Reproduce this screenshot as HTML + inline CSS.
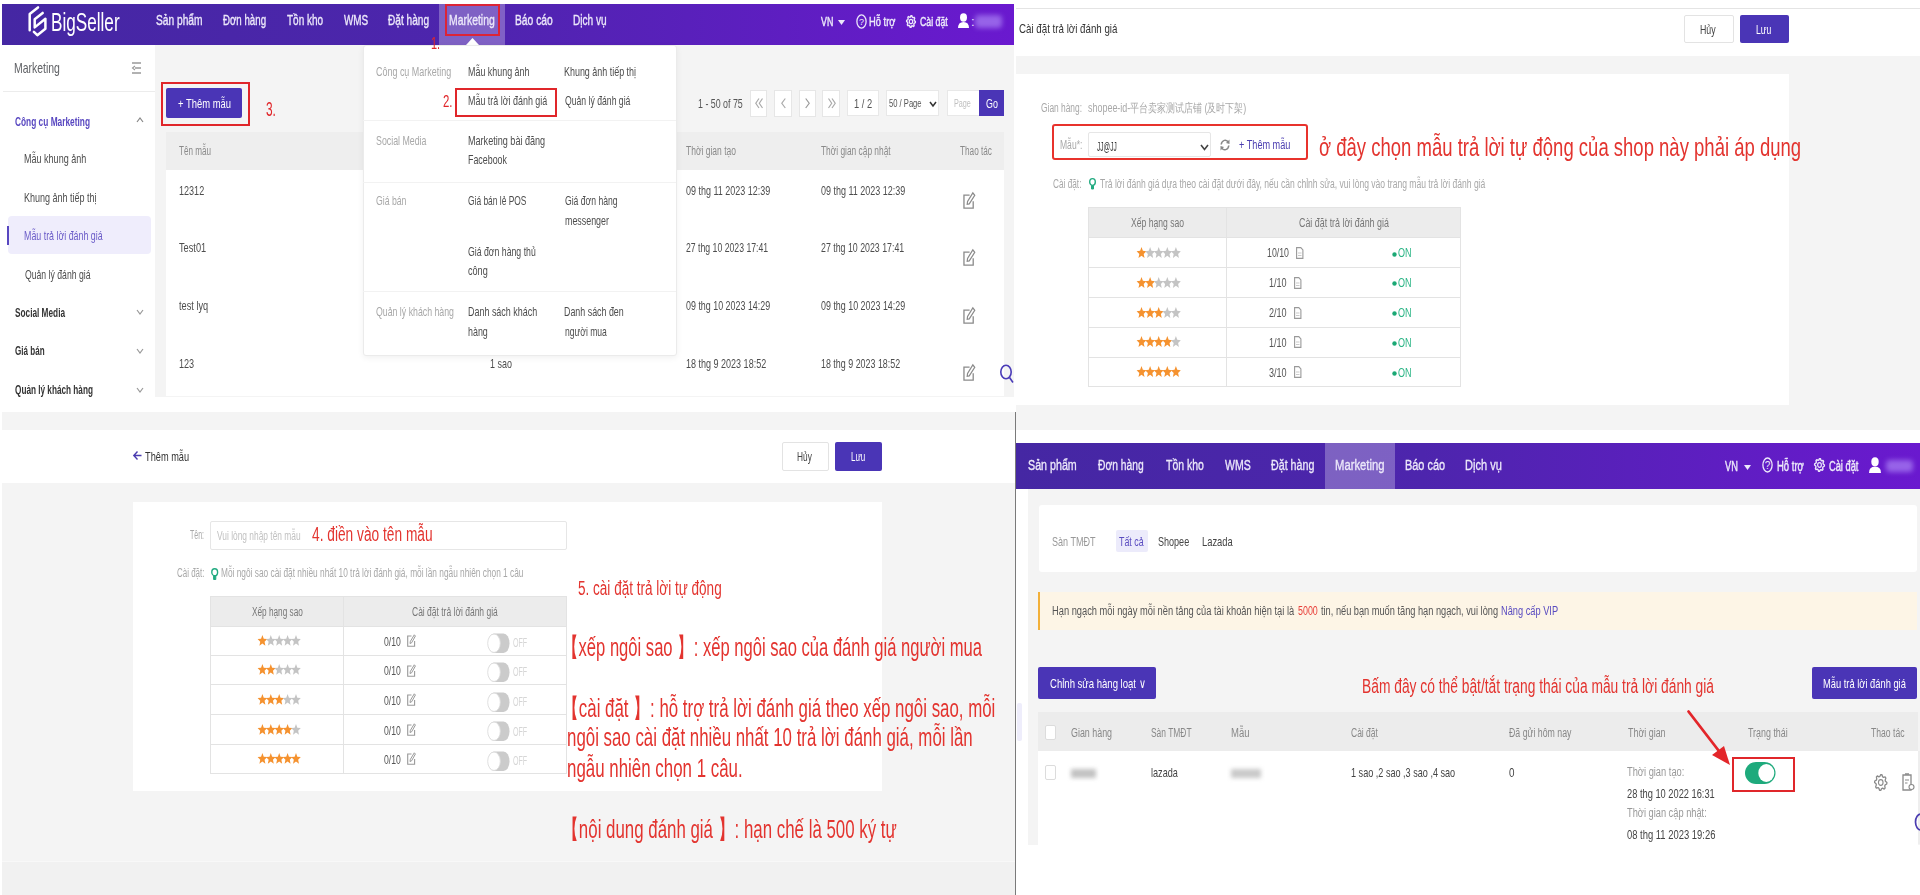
<!DOCTYPE html>
<html><head><meta charset="utf-8"><title>BigSeller</title>
<style>
html,body{margin:0;padding:0;}
body{width:1920px;height:895px;overflow:hidden;position:relative;background:#f4f4f4;font-family:"Liberation Sans", sans-serif;}
.t{position:absolute;white-space:nowrap;line-height:1;transform-origin:0 0;font-family:"Liberation Sans", sans-serif;}
svg{display:block}
</style></head><body>
<div style="position:absolute;left:0px;top:0px;width:1016px;height:412px;background:#ffffff;"></div>
<div style="position:absolute;left:2px;top:4px;width:1012px;height:41px;background:linear-gradient(90deg,#4527a3 0%,#4d25ad 45%,#6a19cf 100%);"></div>
<div style="position:absolute;left:439px;top:4px;width:66px;height:41px;background:rgba(255,255,255,0.28);"></div>
<svg style="position:absolute;left:0px;top:0px;overflow:visible" width="60" height="45" viewBox="0 0 60 45"><path d="M38,7.4 L29.7,14 L29.7,30.3" fill="none" stroke="#fff" stroke-width="2.5" stroke-linecap="round" stroke-linejoin="round"/><path d="M42.7,12.9 L34.7,19.2 L34.7,27.4 L45.4,18.8 L45.4,28.7 L37.3,35.2 L33.9,31.9" fill="none" stroke="#fff" stroke-width="2.5" stroke-linecap="round" stroke-linejoin="round"/></svg>
<span class="t" style="left:50.63px;top:9.84px;font-size:25px;color:#ffffff;font-weight:400;transform:scaleX(0.6856);">BigSeller</span>
<span class="t" style="left:156.00px;top:13.23px;font-size:14.5px;color:#ece8fa;font-weight:400;transform:scaleX(0.7043);-webkit-text-stroke:0.35px #ece8fa">Sản phẩm</span>
<span class="t" style="left:223.00px;top:13.23px;font-size:14.5px;color:#ece8fa;font-weight:400;transform:scaleX(0.6691);-webkit-text-stroke:0.35px #ece8fa">Đơn hàng</span>
<span class="t" style="left:287.00px;top:13.23px;font-size:14.5px;color:#ece8fa;font-weight:400;transform:scaleX(0.6880);-webkit-text-stroke:0.35px #ece8fa">Tồn kho</span>
<span class="t" style="left:343.75px;top:13.23px;font-size:14.5px;color:#ece8fa;font-weight:400;transform:scaleX(0.6832);-webkit-text-stroke:0.35px #ece8fa">WMS</span>
<span class="t" style="left:388.00px;top:13.23px;font-size:14.5px;color:#ece8fa;font-weight:400;transform:scaleX(0.6975);-webkit-text-stroke:0.35px #ece8fa">Đặt hàng</span>
<span class="t" style="left:449.28px;top:13.23px;font-size:14.5px;color:#ece8fa;font-weight:400;transform:scaleX(0.7189);-webkit-text-stroke:0.35px #ece8fa">Marketing</span>
<span class="t" style="left:515.29px;top:13.23px;font-size:14.5px;color:#ece8fa;font-weight:400;transform:scaleX(0.7096);-webkit-text-stroke:0.35px #ece8fa">Báo cáo</span>
<span class="t" style="left:573.30px;top:13.23px;font-size:14.5px;color:#ece8fa;font-weight:400;transform:scaleX(0.6979);-webkit-text-stroke:0.35px #ece8fa">Dịch vụ</span>
<div style="position:absolute;left:444.5px;top:4px;width:55.5px;height:31.5px;box-sizing:border-box;border:2.6px solid #dc2436;background:transparent;border-radius:0px;"></div>
<span class="t" style="left:821.00px;top:15.30px;font-size:13px;color:#ece8fa;font-weight:400;transform:scaleX(0.6791);-webkit-text-stroke:0.45px #ece8fa">VN</span>
<svg style="position:absolute;left:838px;top:20px;overflow:visible" width="7" height="5" viewBox="0 0 7 5"><polygon points="0,0 7,0 3.5,5" fill="#ece8fa"/></svg>
<svg style="position:absolute;left:856px;top:14px;overflow:visible" width="11" height="15" viewBox="0 0 11 15"><ellipse cx="5.5" cy="7.5" rx="4.6" ry="6.6" fill="none" stroke="#ece8fa" stroke-width="1.3"/><text x="5.5" y="11" font-size="9" text-anchor="middle" fill="#ece8fa" font-family="Liberation Sans">?</text></svg>
<span class="t" style="left:869.28px;top:15.30px;font-size:13px;color:#ece8fa;font-weight:400;transform:scaleX(0.7188);-webkit-text-stroke:0.45px #ece8fa">Hỗ trợ</span>
<svg style="position:absolute;left:906px;top:15px;overflow:visible" width="10" height="13" viewBox="0 0 10 13"><polygon points="5.00,0.60 5.86,0.71 6.31,2.25 6.91,2.67 8.11,2.33 8.66,3.22 8.17,4.74 8.37,5.60 9.40,6.50 9.32,7.65 8.17,8.26 7.85,9.06 8.11,10.67 7.44,11.41 6.31,10.75 5.67,11.01 5.00,12.40 4.14,12.29 3.69,10.75 3.09,10.33 1.89,10.67 1.34,9.78 1.83,8.26 1.63,7.40 0.60,6.50 0.68,5.35 1.83,4.74 2.15,3.94 1.89,2.33 2.56,1.59 3.69,2.25 4.33,1.99" fill="none" stroke="#ece8fa" stroke-width="1.4" stroke-linejoin="round"/><ellipse cx="5.0" cy="6.5" rx="1.7000000000000002" ry="2.21" fill="none" stroke="#ece8fa" stroke-width="1.19"/></svg>
<span class="t" style="left:920.00px;top:15.30px;font-size:13px;color:#ece8fa;font-weight:400;transform:scaleX(0.6734);-webkit-text-stroke:0.45px #ece8fa">Cài đặt</span>
<svg style="position:absolute;left:958px;top:13px;overflow:visible" width="11" height="15" viewBox="0 0 11 15"><ellipse cx="5.5" cy="4.5" rx="3.5" ry="4.2" fill="#fff"/><path d="M0,15 Q0,9 5.5,9 Q11,9 11,15 Z" fill="#fff"/></svg>
<span class="t" style="left:971.00px;top:15.30px;font-size:13px;color:#ece8fa;font-weight:400;transform:scaleX(1.0000);">:</span>
<div style="position:absolute;left:975px;top:15px;width:27px;height:13px;background:rgba(190,160,255,0.55);filter:blur(2.5px);border-radius:4px"></div>
<svg style="position:absolute;left:466px;top:38px;overflow:visible" width="13" height="7" viewBox="0 0 13 7"><polygon points="0,7 6.5,0 13,7" fill="#fff"/></svg>
<span class="t" style="left:14.30px;top:60.30px;font-size:15px;color:#606266;font-weight:400;transform:scaleX(0.6975);">Marketing</span>
<svg style="position:absolute;left:132px;top:62px;overflow:visible" width="9" height="12" viewBox="0 0 9 12"><path d="M0,1 H9 M3,6 H9 M0,11 H9" stroke="#999" stroke-width="1.3"/><path d="M3,4 L0.5,6 L3,8" fill="none" stroke="#999" stroke-width="1.1"/></svg>
<div style="position:absolute;left:3px;top:90.5px;width:152px;height:1px;background:#ececec;"></div>
<span class="t" style="left:15.00px;top:114.60px;font-size:13px;color:#5847c0;font-weight:600;transform:scaleX(0.6407);">Công cụ Marketing</span>
<svg style="position:absolute;left:137px;top:118px;overflow:visible" width="6" height="4" viewBox="0 0 6 4"><polyline points="0,4 3.0,0 6,4" fill="none" stroke="#888" stroke-width="1.2"/></svg>
<span class="t" style="left:24.31px;top:152.00px;font-size:13px;color:#4d4d4d;font-weight:400;transform:scaleX(0.6946);">Mẫu khung ảnh</span>
<span class="t" style="left:24.31px;top:190.50px;font-size:13px;color:#4d4d4d;font-weight:400;transform:scaleX(0.6929);">Khung ảnh tiếp thị</span>
<div style="position:absolute;left:7.5px;top:216px;width:143px;height:38px;background:#efedfc;border-radius:4px"></div>
<div style="position:absolute;left:7px;top:226px;width:2px;height:19px;background:#5847c0;"></div>
<span class="t" style="left:24.32px;top:228.50px;font-size:13px;color:#6b5cc8;font-weight:400;transform:scaleX(0.6811);">Mẫu trả lời đánh giá</span>
<span class="t" style="left:25.00px;top:268.00px;font-size:13px;color:#4d4d4d;font-weight:400;transform:scaleX(0.6662);">Quản lý đánh giá</span>
<span class="t" style="left:15.00px;top:306.00px;font-size:13px;color:#333;font-weight:600;transform:scaleX(0.6351);">Social Media</span>
<svg style="position:absolute;left:137px;top:310px;overflow:visible" width="6" height="4" viewBox="0 0 6 4"><polyline points="0,0 3.0,4 6,0" fill="none" stroke="#999" stroke-width="1.2"/></svg>
<span class="t" style="left:15.00px;top:344.00px;font-size:13px;color:#333;font-weight:600;transform:scaleX(0.6201);">Giá bán</span>
<svg style="position:absolute;left:137px;top:349px;overflow:visible" width="6" height="4" viewBox="0 0 6 4"><polyline points="0,0 3.0,4 6,0" fill="none" stroke="#999" stroke-width="1.2"/></svg>
<span class="t" style="left:15.00px;top:383.00px;font-size:13px;color:#333;font-weight:600;transform:scaleX(0.6311);">Quản lý khách hàng</span>
<svg style="position:absolute;left:137px;top:388px;overflow:visible" width="6" height="4" viewBox="0 0 6 4"><polyline points="0,0 3.0,4 6,0" fill="none" stroke="#999" stroke-width="1.2"/></svg>
<div style="position:absolute;left:155px;top:45px;width:861px;height:352px;background:#f4f4f4;"></div>
<div style="position:absolute;left:161px;top:82px;width:89px;height:44px;box-sizing:border-box;border:2px solid #e0262a;background:transparent;border-radius:0px;"></div>
<div style="position:absolute;left:166px;top:88px;width:75.5px;height:30px;background:#4a35b6;border-radius:2px"></div>
<span class="t" style="left:178.00px;top:97.00px;font-size:13px;color:#ffffff;font-weight:400;transform:scaleX(0.7250);">+ Thêm mẫu</span>
<span class="t" style="left:266.00px;top:99.07px;font-size:20px;color:#e0262a;font-weight:400;transform:scaleX(0.5951);">3.</span>
<div style="position:absolute;left:166px;top:132px;width:838px;height:38px;background:#eeeeee;"></div>
<div style="position:absolute;left:166px;top:170px;width:838px;height:226px;background:#ffffff;"></div>
<span class="t" style="left:179.00px;top:145.42px;font-size:12.5px;color:#8a8a8a;font-weight:400;transform:scaleX(0.6481);">Tên mẫu</span>
<span class="t" style="left:686.00px;top:145.42px;font-size:12.5px;color:#8a8a8a;font-weight:400;transform:scaleX(0.6797);">Thời gian tạo</span>
<span class="t" style="left:821.00px;top:145.42px;font-size:12.5px;color:#8a8a8a;font-weight:400;transform:scaleX(0.6691);">Thời gian cập nhật</span>
<span class="t" style="left:959.70px;top:145.42px;font-size:12.5px;color:#8a8a8a;font-weight:400;transform:scaleX(0.6572);">Thao tác</span>
<span class="t" style="left:179.00px;top:184.00px;font-size:13px;color:#4d4d4d;font-weight:400;transform:scaleX(0.6960);">12312</span>
<span class="t" style="left:686.00px;top:184.00px;font-size:13px;color:#4d4d4d;font-weight:400;transform:scaleX(0.6902);">09 thg 11 2023 12:39</span>
<span class="t" style="left:821.00px;top:184.00px;font-size:13px;color:#4d4d4d;font-weight:400;transform:scaleX(0.6902);">09 thg 11 2023 12:39</span>
<svg style="position:absolute;left:963px;top:191.5px;overflow:visible" width="12" height="17" viewBox="0 0 12 17"><path d="M6.6000000000000005,3.06 H0.96 V16.15 H10.2 V9.350000000000001" fill="none" stroke="#8a8a8a" stroke-width="1.3"/><path d="M4.199999999999999,12.24 L4.5600000000000005,9.350000000000001 L9.84,0.8500000000000001 L11.76,3.4000000000000004 L6.24,11.899999999999999 Z" fill="none" stroke="#8a8a8a" stroke-width="1.2"/></svg>
<span class="t" style="left:179.00px;top:241.00px;font-size:13px;color:#4d4d4d;font-weight:400;transform:scaleX(0.7092);">Test01</span>
<span class="t" style="left:686.00px;top:241.00px;font-size:13px;color:#4d4d4d;font-weight:400;transform:scaleX(0.6685);">27 thg 10 2023 17:41</span>
<span class="t" style="left:821.00px;top:241.00px;font-size:13px;color:#4d4d4d;font-weight:400;transform:scaleX(0.6767);">27 thg 10 2023 17:41</span>
<svg style="position:absolute;left:963px;top:249px;overflow:visible" width="12" height="17" viewBox="0 0 12 17"><path d="M6.6000000000000005,3.06 H0.96 V16.15 H10.2 V9.350000000000001" fill="none" stroke="#8a8a8a" stroke-width="1.3"/><path d="M4.199999999999999,12.24 L4.5600000000000005,9.350000000000001 L9.84,0.8500000000000001 L11.76,3.4000000000000004 L6.24,11.899999999999999 Z" fill="none" stroke="#8a8a8a" stroke-width="1.2"/></svg>
<span class="t" style="left:179.00px;top:298.50px;font-size:13px;color:#4d4d4d;font-weight:400;transform:scaleX(0.7081);">test lyq</span>
<span class="t" style="left:686.00px;top:298.50px;font-size:13px;color:#4d4d4d;font-weight:400;transform:scaleX(0.6848);">09 thg 10 2023 14:29</span>
<span class="t" style="left:821.00px;top:298.50px;font-size:13px;color:#4d4d4d;font-weight:400;transform:scaleX(0.6848);">09 thg 10 2023 14:29</span>
<svg style="position:absolute;left:963px;top:306.5px;overflow:visible" width="12" height="17" viewBox="0 0 12 17"><path d="M6.6000000000000005,3.06 H0.96 V16.15 H10.2 V9.350000000000001" fill="none" stroke="#8a8a8a" stroke-width="1.3"/><path d="M4.199999999999999,12.24 L4.5600000000000005,9.350000000000001 L9.84,0.8500000000000001 L11.76,3.4000000000000004 L6.24,11.899999999999999 Z" fill="none" stroke="#8a8a8a" stroke-width="1.2"/></svg>
<span class="t" style="left:179.00px;top:357.00px;font-size:13px;color:#4d4d4d;font-weight:400;transform:scaleX(0.6990);">123</span>
<span class="t" style="left:686.00px;top:357.00px;font-size:13px;color:#4d4d4d;font-weight:400;transform:scaleX(0.6931);">18 thg 9 2023 18:52</span>
<span class="t" style="left:821.00px;top:357.00px;font-size:13px;color:#4d4d4d;font-weight:400;transform:scaleX(0.6844);">18 thg 9 2023 18:52</span>
<svg style="position:absolute;left:963px;top:364px;overflow:visible" width="12" height="17" viewBox="0 0 12 17"><path d="M6.6000000000000005,3.06 H0.96 V16.15 H10.2 V9.350000000000001" fill="none" stroke="#8a8a8a" stroke-width="1.3"/><path d="M4.199999999999999,12.24 L4.5600000000000005,9.350000000000001 L9.84,0.8500000000000001 L11.76,3.4000000000000004 L6.24,11.899999999999999 Z" fill="none" stroke="#8a8a8a" stroke-width="1.2"/></svg>
<span class="t" style="left:490.00px;top:357.00px;font-size:13px;color:#4d4d4d;font-weight:400;transform:scaleX(0.6873);">1 sao</span>
<svg style="position:absolute;left:1000px;top:364px;overflow:visible" width="14" height="19" viewBox="0 0 14 19"><ellipse cx="6" cy="8" rx="5.2" ry="6.8" fill="none" stroke="#4a3bb8" stroke-width="1.6"/><line x1="9.5" y1="13.5" x2="13" y2="18.5" stroke="#4a3bb8" stroke-width="1.6"/></svg>
<span class="t" style="left:698.40px;top:96.50px;font-size:13px;color:#555;font-weight:400;transform:scaleX(0.6805);">1 - 50 of 75</span>
<div style="position:absolute;left:750px;top:89.5px;width:17.399999999999977px;height:27px;box-sizing:border-box;border:1px solid #e6e6e6;background:#fff;border-radius:0px;"></div>
<div style="position:absolute;left:774.4px;top:89.5px;width:17.300000000000068px;height:27px;box-sizing:border-box;border:1px solid #e6e6e6;background:#fff;border-radius:0px;"></div>
<div style="position:absolute;left:799px;top:89.5px;width:17px;height:27px;box-sizing:border-box;border:1px solid #e6e6e6;background:#fff;border-radius:0px;"></div>
<div style="position:absolute;left:822.4px;top:89.5px;width:18.100000000000023px;height:27px;box-sizing:border-box;border:1px solid #e6e6e6;background:#fff;border-radius:0px;"></div>
<svg style="position:absolute;left:755px;top:97.5px;overflow:visible" width="8" height="10.5" viewBox="0 0 8 10.5"><polyline points="4,0.5 0.8,5.25 4,10" fill="none" stroke="#aaa" stroke-width="1.2"/><polyline points="7.5,0.5 4.3,5.25 7.5,10" fill="none" stroke="#aaa" stroke-width="1.2"/></svg>
<svg style="position:absolute;left:781px;top:97.5px;overflow:visible" width="5" height="10.5" viewBox="0 0 5 10.5"><polyline points="4.3,0.5 0.8,5.25 4.3,10" fill="none" stroke="#aaa" stroke-width="1.2"/></svg>
<svg style="position:absolute;left:805px;top:97.5px;overflow:visible" width="5" height="10.5" viewBox="0 0 5 10.5"><polyline points="0.7,0.5 4.2,5.25 0.7,10" fill="none" stroke="#999" stroke-width="1.2"/></svg>
<svg style="position:absolute;left:828px;top:97.5px;overflow:visible" width="8" height="10.5" viewBox="0 0 8 10.5"><polyline points="0.5,0.5 3.7,5.25 0.5,10" fill="none" stroke="#aaa" stroke-width="1.2"/><polyline points="4,0.5 7.2,5.25 4,10" fill="none" stroke="#aaa" stroke-width="1.2"/></svg>
<div style="position:absolute;left:847.4px;top:89.5px;width:31.6px;height:26.5px;box-sizing:border-box;border:1px solid #e8e8e8;background:#fff;border-radius:0px;"></div>
<span class="t" style="left:854.00px;top:96.50px;font-size:13px;color:#555;font-weight:400;transform:scaleX(0.7181);">1 / 2</span>
<div style="position:absolute;left:885.5px;top:89.5px;width:53.5px;height:26.5px;box-sizing:border-box;border:1px solid #e8e8e8;background:#fff;border-radius:0px;"></div>
<span class="t" style="left:888.50px;top:97.69px;font-size:11px;color:#555;font-weight:400;transform:scaleX(0.6918);">50 / Page</span>
<svg style="position:absolute;left:930px;top:102px;overflow:visible" width="6" height="4" viewBox="0 0 6 4"><polyline points="0,0 3.0,4 6,0" fill="none" stroke="#333" stroke-width="1.5"/></svg>
<div style="position:absolute;left:947px;top:89.5px;width:33px;height:26.5px;box-sizing:border-box;border:1px solid #e8e8e8;background:#fff;border-radius:0px;"></div>
<span class="t" style="left:953.80px;top:97.69px;font-size:11px;color:#c0c0c0;font-weight:400;transform:scaleX(0.6570);">Page</span>
<div style="position:absolute;left:979px;top:89.5px;width:25px;height:26.5px;background:#4a35b6;"></div>
<span class="t" style="left:985.70px;top:96.50px;font-size:13px;color:#ffffff;font-weight:400;transform:scaleX(0.6837);">Go</span>
<div style="position:absolute;left:362.5px;top:45px;width:314.5px;height:311px;box-sizing:border-box;border:1px solid #ebebeb;background:#fff;border-radius:3px;box-shadow:0 2px 6px rgba(0,0,0,0.06)"></div>
<span class="t" style="left:376.00px;top:65.00px;font-size:13px;color:#a8a8a8;font-weight:400;transform:scaleX(0.6888);">Công cụ Marketing</span>
<span class="t" style="left:467.71px;top:65.00px;font-size:13px;color:#4d4d4d;font-weight:400;transform:scaleX(0.6856);">Mẫu khung ảnh</span>
<span class="t" style="left:563.91px;top:65.00px;font-size:13px;color:#4d4d4d;font-weight:400;transform:scaleX(0.6871);">Khung ảnh tiếp thị</span>
<span class="t" style="left:443.00px;top:93.01px;font-size:17px;color:#e0262a;font-weight:400;transform:scaleX(0.6689);">2.</span>
<div style="position:absolute;left:455px;top:87.5px;width:101.5px;height:29px;box-sizing:border-box;border:2px solid #e0262a;background:transparent;border-radius:0px;"></div>
<span class="t" style="left:467.71px;top:93.60px;font-size:13px;color:#4d4d4d;font-weight:400;transform:scaleX(0.6864);">Mẫu trả lời đánh giá</span>
<span class="t" style="left:564.60px;top:93.60px;font-size:13px;color:#4d4d4d;font-weight:400;transform:scaleX(0.6652);">Quản lý đánh giá</span>
<div style="position:absolute;left:363px;top:119.5px;width:313px;height:1px;background:#f2f2f2;"></div>
<span class="t" style="left:376.00px;top:134.40px;font-size:13px;color:#a8a8a8;font-weight:400;transform:scaleX(0.6782);">Social Media</span>
<span class="t" style="left:467.70px;top:134.40px;font-size:13px;color:#4d4d4d;font-weight:400;transform:scaleX(0.6978);">Marketing bài đăng</span>
<span class="t" style="left:467.72px;top:153.40px;font-size:13px;color:#4d4d4d;font-weight:400;transform:scaleX(0.6821);">Facebook</span>
<div style="position:absolute;left:363px;top:181.5px;width:313px;height:1px;background:#f2f2f2;"></div>
<span class="t" style="left:376.00px;top:194.00px;font-size:13px;color:#a8a8a8;font-weight:400;transform:scaleX(0.6688);">Giá bán</span>
<span class="t" style="left:468.40px;top:194.00px;font-size:13px;color:#4d4d4d;font-weight:400;transform:scaleX(0.6464);">Giá bán lẻ POS</span>
<span class="t" style="left:564.60px;top:194.00px;font-size:13px;color:#4d4d4d;font-weight:400;transform:scaleX(0.6622);">Giá đơn hàng</span>
<span class="t" style="left:564.60px;top:213.70px;font-size:13px;color:#4d4d4d;font-weight:400;transform:scaleX(0.6833);">messenger</span>
<span class="t" style="left:468.40px;top:245.00px;font-size:13px;color:#4d4d4d;font-weight:400;transform:scaleX(0.6706);">Giá đơn hàng thủ</span>
<span class="t" style="left:468.40px;top:264.00px;font-size:13px;color:#4d4d4d;font-weight:400;transform:scaleX(0.7010);">công</span>
<div style="position:absolute;left:363px;top:290.5px;width:313px;height:1px;background:#f2f2f2;"></div>
<span class="t" style="left:376.00px;top:305.00px;font-size:13px;color:#a8a8a8;font-weight:400;transform:scaleX(0.6741);">Quản lý khách hàng</span>
<span class="t" style="left:467.71px;top:305.00px;font-size:13px;color:#4d4d4d;font-weight:400;transform:scaleX(0.6884);">Danh sách khách</span>
<span class="t" style="left:468.40px;top:324.80px;font-size:13px;color:#4d4d4d;font-weight:400;transform:scaleX(0.6832);">hàng</span>
<span class="t" style="left:563.92px;top:305.00px;font-size:13px;color:#4d4d4d;font-weight:400;transform:scaleX(0.6831);">Danh sách đen</span>
<span class="t" style="left:564.60px;top:324.80px;font-size:13px;color:#4d4d4d;font-weight:400;transform:scaleX(0.6600);">người mua</span>
<span class="t" style="left:431.36px;top:34.61px;font-size:17px;color:#e0262a;font-weight:400;transform:scaleX(0.6423);">1.</span>
<div style="position:absolute;left:1016px;top:0px;width:904px;height:430px;background:#f4f4f4;"></div>
<div style="position:absolute;left:1014px;top:0px;width:2px;height:412px;background:#ffffff;"></div>
<div style="position:absolute;left:1016px;top:0px;width:904px;height:7.5px;background:#ffffff;"></div>
<div style="position:absolute;left:1016px;top:7.5px;width:904px;height:1px;background:#e4e4e4;"></div>
<div style="position:absolute;left:1016px;top:8.5px;width:904px;height:47.5px;background:#ffffff;"></div>
<div style="position:absolute;left:1016px;top:74px;width:773px;height:330.5px;background:#ffffff;"></div>
<span class="t" style="left:1019.00px;top:22.00px;font-size:13px;color:#333;font-weight:400;transform:scaleX(0.7492);">Cài đặt trả lời đánh giá</span>
<div style="position:absolute;left:1683.5px;top:14.7px;width:50px;height:28px;box-sizing:border-box;border:1px solid #e3e3e3;background:#fff;border-radius:2px;"></div>
<span class="t" style="left:1700.02px;top:22.50px;font-size:13px;color:#444;font-weight:400;transform:scaleX(0.6764);">Hủy</span>
<div style="position:absolute;left:1739.5px;top:14.5px;width:49.5px;height:28px;background:#4a35b6;border-radius:2px"></div>
<span class="t" style="left:1756.34px;top:22.50px;font-size:13px;color:#fff;font-weight:400;transform:scaleX(0.6611);">Lưu</span>
<span class="t" style="left:1040.80px;top:101.84px;font-size:12px;color:#a8a8a8;font-weight:400;transform:scaleX(0.6989);">Gian hàng:</span>
<span class="t" style="left:1087.80px;top:101.84px;font-size:12px;color:#a8a8a8;font-weight:400;transform:scaleX(0.7461);">shopee-id-平台卖家测试店铺 (及时下架)</span>
<div style="position:absolute;left:1088.4px;top:131.8px;width:123px;height:25.5px;box-sizing:border-box;border:1px solid #e6e6e6;background:#fff;border-radius:2px;"></div>
<span class="t" style="left:1059.50px;top:139.44px;font-size:12px;color:#a8a8a8;font-weight:400;transform:scaleX(0.7126);">Mẫu*:</span>
<span class="t" style="left:1097.00px;top:140.64px;font-size:12px;color:#333;font-weight:400;transform:scaleX(0.5445);">JJ@JJ</span>
<svg style="position:absolute;left:1200.5px;top:144.5px;overflow:visible" width="7" height="4.5" viewBox="0 0 7 4.5"><polyline points="0,0 3.5,4.5 7,0" fill="none" stroke="#444" stroke-width="1.6"/></svg>
<svg style="position:absolute;left:1220px;top:139px;overflow:visible" width="10" height="12" viewBox="0 0 10 12"><path d="M8.5,3.5 A4,5 0 0 0 1.2,5.5" fill="none" stroke="#888" stroke-width="1.5"/><path d="M1.5,8.5 A4,5 0 0 0 8.8,6.5" fill="none" stroke="#888" stroke-width="1.5"/><polygon points="9.5,0.5 9.5,5 6,4" fill="#888"/><polygon points="0.5,11.5 0.5,7 4,8" fill="#888"/></svg>
<span class="t" style="left:1239.00px;top:138.82px;font-size:12.5px;color:#4a3cb0;font-weight:400;transform:scaleX(0.7313);">+ Thêm mẫu</span>
<div style="position:absolute;left:1051.5px;top:123.5px;width:256.5px;height:36.3px;box-sizing:border-box;border:2.8px solid #e8322c;background:transparent;border-radius:3px;"></div>
<span class="t" style="left:1318.77px;top:134.81px;font-size:25.5px;color:#e3342f;font-weight:400;transform:scaleX(0.7256);">ở đây chọn mẫu trả lời tự động của shop này phải áp dụng</span>
<span class="t" style="left:1053.40px;top:178.14px;font-size:12px;color:#a8a8a8;font-weight:400;transform:scaleX(0.6874);">Cài đặt:</span>
<svg style="position:absolute;left:1089px;top:178px;overflow:visible" width="7" height="12" viewBox="0 0 7 12"><ellipse cx="3.5" cy="4" rx="2.8" ry="3.4" fill="none" stroke="#22aa80" stroke-width="1.4"/><path d="M2.5,7.5 L2.5,11 L4.5,11 L4.5,7.5" fill="#22aa80" stroke="#22aa80" stroke-width="1"/></svg>
<span class="t" style="left:1099.50px;top:178.14px;font-size:12px;color:#a8a8a8;font-weight:400;transform:scaleX(0.7126);">Trả lời đánh giá dựa theo cài đặt dưới đây, nếu cần chỉnh sửa, vui lòng vào trang mẫu trả lời đánh giá</span>
<div style="position:absolute;left:1088px;top:207px;width:373px;height:180px;box-sizing:border-box;border:1px solid #e3e3e3;background:#fff;border-radius:0px;"></div>
<div style="position:absolute;left:1089px;top:208px;width:371px;height:29.5px;background:#ececec;"></div>
<div style="position:absolute;left:1226px;top:208px;width:1px;height:178px;background:#e3e3e3;"></div>
<div style="position:absolute;left:1089px;top:237px;width:371px;height:1px;background:#e3e3e3;"></div>
<div style="position:absolute;left:1089px;top:267px;width:371px;height:1px;background:#e3e3e3;"></div>
<div style="position:absolute;left:1089px;top:297px;width:371px;height:1px;background:#e3e3e3;"></div>
<div style="position:absolute;left:1089px;top:327px;width:371px;height:1px;background:#e3e3e3;"></div>
<div style="position:absolute;left:1089px;top:357px;width:371px;height:1px;background:#e3e3e3;"></div>
<span class="t" style="left:1131.00px;top:216.84px;font-size:12px;color:#777;font-weight:400;transform:scaleX(0.7152);">Xếp hạng sao</span>
<span class="t" style="left:1298.50px;top:216.84px;font-size:12px;color:#777;font-weight:400;transform:scaleX(0.7410);">Cài đặt trả lời đánh giá</span>
<svg style="position:absolute;left:1136px;top:246.7px;overflow:visible" width="46" height="12" viewBox="0 0 46 12"><polygon points="5.50,0.00 6.86,3.85 10.39,4.18 7.70,6.89 8.52,10.94 5.50,8.77 2.48,10.94 3.30,6.89 0.61,4.18 4.14,3.85" fill="#f5922f"/><polygon points="14.10,0.00 15.46,3.85 18.99,4.18 16.30,6.89 17.12,10.94 14.10,8.77 11.08,10.94 11.90,6.89 9.21,4.18 12.74,3.85" fill="#c4c4c4"/><polygon points="22.70,0.00 24.06,3.85 27.59,4.18 24.90,6.89 25.72,10.94 22.70,8.77 19.68,10.94 20.50,6.89 17.81,4.18 21.34,3.85" fill="#c4c4c4"/><polygon points="31.30,0.00 32.66,3.85 36.19,4.18 33.50,6.89 34.32,10.94 31.30,8.77 28.28,10.94 29.10,6.89 26.41,4.18 29.94,3.85" fill="#c4c4c4"/><polygon points="39.90,0.00 41.26,3.85 44.79,4.18 42.10,6.89 42.92,10.94 39.90,8.77 36.88,10.94 37.70,6.89 35.01,4.18 38.54,3.85" fill="#c4c4c4"/></svg>
<span class="t" style="left:1266.80px;top:247.04px;font-size:12px;color:#555;font-weight:400;transform:scaleX(0.7313);">10/10</span>
<svg style="position:absolute;left:1296px;top:246.7px;overflow:visible" width="7.5" height="12" viewBox="0 0 7.5 12"><path d="M0.6,0.6 H4.8 L6.9,3 V11.4 H0.6 Z" fill="none" stroke="#999" stroke-width="1.1"/><path d="M2,6 H5.5 M2,8.5 H5.5" stroke="#bbb" stroke-width="0.8"/></svg>
<svg style="position:absolute;left:1391.5px;top:251.5px;overflow:visible" width="5" height="5" viewBox="0 0 5 5"><circle cx="2.5" cy="2.5" r="2.2" fill="#1aa874"/></svg>
<span class="t" style="left:1397.80px;top:247.04px;font-size:12px;color:#2ab585;font-weight:400;transform:scaleX(0.7500);">ON</span>
<svg style="position:absolute;left:1136px;top:276.59999999999997px;overflow:visible" width="46" height="12" viewBox="0 0 46 12"><polygon points="5.50,0.00 6.86,3.85 10.39,4.18 7.70,6.89 8.52,10.94 5.50,8.77 2.48,10.94 3.30,6.89 0.61,4.18 4.14,3.85" fill="#f5922f"/><polygon points="14.10,0.00 15.46,3.85 18.99,4.18 16.30,6.89 17.12,10.94 14.10,8.77 11.08,10.94 11.90,6.89 9.21,4.18 12.74,3.85" fill="#f5922f"/><polygon points="22.70,0.00 24.06,3.85 27.59,4.18 24.90,6.89 25.72,10.94 22.70,8.77 19.68,10.94 20.50,6.89 17.81,4.18 21.34,3.85" fill="#c4c4c4"/><polygon points="31.30,0.00 32.66,3.85 36.19,4.18 33.50,6.89 34.32,10.94 31.30,8.77 28.28,10.94 29.10,6.89 26.41,4.18 29.94,3.85" fill="#c4c4c4"/><polygon points="39.90,0.00 41.26,3.85 44.79,4.18 42.10,6.89 42.92,10.94 39.90,8.77 36.88,10.94 37.70,6.89 35.01,4.18 38.54,3.85" fill="#c4c4c4"/></svg>
<span class="t" style="left:1268.70px;top:276.94px;font-size:12px;color:#555;font-weight:400;transform:scaleX(0.7559);">1/10</span>
<svg style="position:absolute;left:1294px;top:276.59999999999997px;overflow:visible" width="7.5" height="12" viewBox="0 0 7.5 12"><path d="M0.6,0.6 H4.8 L6.9,3 V11.4 H0.6 Z" fill="none" stroke="#999" stroke-width="1.1"/><path d="M2,6 H5.5 M2,8.5 H5.5" stroke="#bbb" stroke-width="0.8"/></svg>
<svg style="position:absolute;left:1391.5px;top:281.4px;overflow:visible" width="5" height="5" viewBox="0 0 5 5"><circle cx="2.5" cy="2.5" r="2.2" fill="#1aa874"/></svg>
<span class="t" style="left:1397.80px;top:276.94px;font-size:12px;color:#2ab585;font-weight:400;transform:scaleX(0.7500);">ON</span>
<svg style="position:absolute;left:1136px;top:306.5px;overflow:visible" width="46" height="12" viewBox="0 0 46 12"><polygon points="5.50,0.00 6.86,3.85 10.39,4.18 7.70,6.89 8.52,10.94 5.50,8.77 2.48,10.94 3.30,6.89 0.61,4.18 4.14,3.85" fill="#f5922f"/><polygon points="14.10,0.00 15.46,3.85 18.99,4.18 16.30,6.89 17.12,10.94 14.10,8.77 11.08,10.94 11.90,6.89 9.21,4.18 12.74,3.85" fill="#f5922f"/><polygon points="22.70,0.00 24.06,3.85 27.59,4.18 24.90,6.89 25.72,10.94 22.70,8.77 19.68,10.94 20.50,6.89 17.81,4.18 21.34,3.85" fill="#f5922f"/><polygon points="31.30,0.00 32.66,3.85 36.19,4.18 33.50,6.89 34.32,10.94 31.30,8.77 28.28,10.94 29.10,6.89 26.41,4.18 29.94,3.85" fill="#c4c4c4"/><polygon points="39.90,0.00 41.26,3.85 44.79,4.18 42.10,6.89 42.92,10.94 39.90,8.77 36.88,10.94 37.70,6.89 35.01,4.18 38.54,3.85" fill="#c4c4c4"/></svg>
<span class="t" style="left:1268.70px;top:306.84px;font-size:12px;color:#555;font-weight:400;transform:scaleX(0.7559);">2/10</span>
<svg style="position:absolute;left:1294px;top:306.5px;overflow:visible" width="7.5" height="12" viewBox="0 0 7.5 12"><path d="M0.6,0.6 H4.8 L6.9,3 V11.4 H0.6 Z" fill="none" stroke="#999" stroke-width="1.1"/><path d="M2,6 H5.5 M2,8.5 H5.5" stroke="#bbb" stroke-width="0.8"/></svg>
<svg style="position:absolute;left:1391.5px;top:311.3px;overflow:visible" width="5" height="5" viewBox="0 0 5 5"><circle cx="2.5" cy="2.5" r="2.2" fill="#1aa874"/></svg>
<span class="t" style="left:1397.80px;top:306.84px;font-size:12px;color:#2ab585;font-weight:400;transform:scaleX(0.7500);">ON</span>
<svg style="position:absolute;left:1136px;top:336.4px;overflow:visible" width="46" height="12" viewBox="0 0 46 12"><polygon points="5.50,0.00 6.86,3.85 10.39,4.18 7.70,6.89 8.52,10.94 5.50,8.77 2.48,10.94 3.30,6.89 0.61,4.18 4.14,3.85" fill="#f5922f"/><polygon points="14.10,0.00 15.46,3.85 18.99,4.18 16.30,6.89 17.12,10.94 14.10,8.77 11.08,10.94 11.90,6.89 9.21,4.18 12.74,3.85" fill="#f5922f"/><polygon points="22.70,0.00 24.06,3.85 27.59,4.18 24.90,6.89 25.72,10.94 22.70,8.77 19.68,10.94 20.50,6.89 17.81,4.18 21.34,3.85" fill="#f5922f"/><polygon points="31.30,0.00 32.66,3.85 36.19,4.18 33.50,6.89 34.32,10.94 31.30,8.77 28.28,10.94 29.10,6.89 26.41,4.18 29.94,3.85" fill="#f5922f"/><polygon points="39.90,0.00 41.26,3.85 44.79,4.18 42.10,6.89 42.92,10.94 39.90,8.77 36.88,10.94 37.70,6.89 35.01,4.18 38.54,3.85" fill="#c4c4c4"/></svg>
<span class="t" style="left:1268.70px;top:336.74px;font-size:12px;color:#555;font-weight:400;transform:scaleX(0.7559);">1/10</span>
<svg style="position:absolute;left:1294px;top:336.4px;overflow:visible" width="7.5" height="12" viewBox="0 0 7.5 12"><path d="M0.6,0.6 H4.8 L6.9,3 V11.4 H0.6 Z" fill="none" stroke="#999" stroke-width="1.1"/><path d="M2,6 H5.5 M2,8.5 H5.5" stroke="#bbb" stroke-width="0.8"/></svg>
<svg style="position:absolute;left:1391.5px;top:341.2px;overflow:visible" width="5" height="5" viewBox="0 0 5 5"><circle cx="2.5" cy="2.5" r="2.2" fill="#1aa874"/></svg>
<span class="t" style="left:1397.80px;top:336.74px;font-size:12px;color:#2ab585;font-weight:400;transform:scaleX(0.7500);">ON</span>
<svg style="position:absolute;left:1136px;top:366.29999999999995px;overflow:visible" width="46" height="12" viewBox="0 0 46 12"><polygon points="5.50,0.00 6.86,3.85 10.39,4.18 7.70,6.89 8.52,10.94 5.50,8.77 2.48,10.94 3.30,6.89 0.61,4.18 4.14,3.85" fill="#f5922f"/><polygon points="14.10,0.00 15.46,3.85 18.99,4.18 16.30,6.89 17.12,10.94 14.10,8.77 11.08,10.94 11.90,6.89 9.21,4.18 12.74,3.85" fill="#f5922f"/><polygon points="22.70,0.00 24.06,3.85 27.59,4.18 24.90,6.89 25.72,10.94 22.70,8.77 19.68,10.94 20.50,6.89 17.81,4.18 21.34,3.85" fill="#f5922f"/><polygon points="31.30,0.00 32.66,3.85 36.19,4.18 33.50,6.89 34.32,10.94 31.30,8.77 28.28,10.94 29.10,6.89 26.41,4.18 29.94,3.85" fill="#f5922f"/><polygon points="39.90,0.00 41.26,3.85 44.79,4.18 42.10,6.89 42.92,10.94 39.90,8.77 36.88,10.94 37.70,6.89 35.01,4.18 38.54,3.85" fill="#f5922f"/></svg>
<span class="t" style="left:1268.70px;top:366.64px;font-size:12px;color:#555;font-weight:400;transform:scaleX(0.7559);">3/10</span>
<svg style="position:absolute;left:1294px;top:366.29999999999995px;overflow:visible" width="7.5" height="12" viewBox="0 0 7.5 12"><path d="M0.6,0.6 H4.8 L6.9,3 V11.4 H0.6 Z" fill="none" stroke="#999" stroke-width="1.1"/><path d="M2,6 H5.5 M2,8.5 H5.5" stroke="#bbb" stroke-width="0.8"/></svg>
<svg style="position:absolute;left:1391.5px;top:371.1px;overflow:visible" width="5" height="5" viewBox="0 0 5 5"><circle cx="2.5" cy="2.5" r="2.2" fill="#1aa874"/></svg>
<span class="t" style="left:1397.80px;top:366.64px;font-size:12px;color:#2ab585;font-weight:400;transform:scaleX(0.7500);">ON</span>
<div style="position:absolute;left:0px;top:412px;width:1015px;height:483px;background:#f4f4f4;"></div>
<div style="position:absolute;left:0px;top:412px;width:2px;height:483px;background:#ffffff;"></div>
<div style="position:absolute;left:2px;top:430.4px;width:1013px;height:52.6px;background:#ffffff;"></div>
<div style="position:absolute;left:2px;top:861px;width:1013px;height:1px;background:#f8f8f8;"></div>
<div style="position:absolute;left:2px;top:862px;width:1013px;height:33px;background:#f1f1f1;"></div>
<div style="position:absolute;left:1015px;top:412px;width:1px;height:483px;background:#7a7a7a;"></div>
<svg style="position:absolute;left:132.5px;top:450px;overflow:visible" width="9" height="11" viewBox="0 0 9 11"><path d="M8.5,5.5 H1 M4.5,1.5 L0.8,5.5 L4.5,9.5" fill="none" stroke="#4a3cb0" stroke-width="1.4"/></svg>
<span class="t" style="left:144.60px;top:450.00px;font-size:13px;color:#333;font-weight:400;transform:scaleX(0.7092);">Thêm mẫu</span>
<div style="position:absolute;left:781.5px;top:442px;width:47.2px;height:28.8px;box-sizing:border-box;border:1px solid #e3e3e3;background:#fff;border-radius:2px;"></div>
<span class="t" style="left:797.16px;top:450.40px;font-size:13px;color:#444;font-weight:400;transform:scaleX(0.6411);">Hủy</span>
<div style="position:absolute;left:834.5px;top:442px;width:47.5px;height:28.8px;background:#4a35b6;border-radius:2px"></div>
<span class="t" style="left:851.18px;top:450.40px;font-size:13px;color:#fff;font-weight:400;transform:scaleX(0.6155);">Lưu</span>
<div style="position:absolute;left:132.5px;top:502px;width:749.5px;height:289px;background:#ffffff;"></div>
<span class="t" style="left:190.20px;top:529.14px;font-size:12px;color:#a8a8a8;font-weight:400;transform:scaleX(0.5828);">Tên:</span>
<div style="position:absolute;left:210.3px;top:521.2px;width:357px;height:29px;box-sizing:border-box;border:1px solid #e6e6e6;background:#fff;border-radius:2px;"></div>
<span class="t" style="left:217.00px;top:530.04px;font-size:12px;color:#c2c2c2;font-weight:400;transform:scaleX(0.6993);">Vui lòng nhập tên mẫu</span>
<span class="t" style="left:312.00px;top:525.29px;font-size:19.5px;color:#e3342f;font-weight:400;transform:scaleX(0.7041);">4. điền vào tên mẫu</span>
<span class="t" style="left:176.80px;top:567.44px;font-size:12px;color:#a8a8a8;font-weight:400;transform:scaleX(0.6631);">Cài đặt:</span>
<svg style="position:absolute;left:210.8px;top:567.5px;overflow:visible" width="7.5" height="12.5" viewBox="0 0 7.5 12.5"><ellipse cx="3.7" cy="4.2" rx="2.9" ry="3.5" fill="none" stroke="#22aa80" stroke-width="1.4"/><path d="M2.6,7.8 L2.6,11.5 L4.8,11.5 L4.8,7.8" fill="#22aa80" stroke="#22aa80" stroke-width="1"/></svg>
<span class="t" style="left:221.00px;top:567.44px;font-size:12px;color:#a8a8a8;font-weight:400;transform:scaleX(0.6935);">Mỗi ngôi sao cài đặt nhiều nhất 10 trả lời đánh giá, mỗi lần ngẫu nhiên chọn 1 câu</span>
<div style="position:absolute;left:210px;top:596px;width:357px;height:178px;box-sizing:border-box;border:1px solid #e3e3e3;background:#fff;border-radius:0px;"></div>
<div style="position:absolute;left:211px;top:597px;width:355px;height:29.3px;background:#ececec;"></div>
<div style="position:absolute;left:343px;top:597px;width:1px;height:176px;background:#e3e3e3;"></div>
<div style="position:absolute;left:211px;top:626px;width:355px;height:1px;background:#e3e3e3;"></div>
<div style="position:absolute;left:211px;top:655px;width:355px;height:1px;background:#e3e3e3;"></div>
<div style="position:absolute;left:211px;top:684px;width:355px;height:1px;background:#e3e3e3;"></div>
<div style="position:absolute;left:211px;top:714px;width:355px;height:1px;background:#e3e3e3;"></div>
<div style="position:absolute;left:211px;top:744px;width:355px;height:1px;background:#e3e3e3;"></div>
<span class="t" style="left:251.60px;top:605.54px;font-size:12px;color:#777;font-weight:400;transform:scaleX(0.6856);">Xếp hạng sao</span>
<span class="t" style="left:411.90px;top:605.54px;font-size:12px;color:#777;font-weight:400;transform:scaleX(0.7073);">Cài đặt trả lời đánh giá</span>
<svg style="position:absolute;left:256.8px;top:634.7px;overflow:visible" width="45" height="11.8" viewBox="0 0 45 11.8"><polygon points="5.40,0.00 6.74,3.78 10.20,4.10 7.56,6.77 8.37,10.75 5.40,8.61 2.43,10.75 3.24,6.77 0.60,4.10 4.06,3.78" fill="#f5922f"/><polygon points="13.80,0.00 15.14,3.78 18.60,4.10 15.96,6.77 16.77,10.75 13.80,8.61 10.83,10.75 11.64,6.77 9.00,4.10 12.46,3.78" fill="#c4c4c4"/><polygon points="22.20,0.00 23.54,3.78 27.00,4.10 24.36,6.77 25.17,10.75 22.20,8.61 19.23,10.75 20.04,6.77 17.40,4.10 20.86,3.78" fill="#c4c4c4"/><polygon points="30.60,0.00 31.94,3.78 35.40,4.10 32.76,6.77 33.57,10.75 30.60,8.61 27.63,10.75 28.44,6.77 25.80,4.10 29.26,3.78" fill="#c4c4c4"/><polygon points="39.00,0.00 40.34,3.78 43.80,4.10 41.16,6.77 41.97,10.75 39.00,8.61 36.03,10.75 36.84,6.77 34.20,4.10 37.66,3.78" fill="#c4c4c4"/></svg>
<span class="t" style="left:384.00px;top:635.74px;font-size:12px;color:#555;font-weight:400;transform:scaleX(0.7179);">0/10</span>
<svg style="position:absolute;left:406.8px;top:634.0px;overflow:visible" width="8.5" height="13" viewBox="0 0 8.5 13"><path d="M4.5,2 H0.7 V12.3 H7.6 V7" fill="none" stroke="#999" stroke-width="1.1"/><path d="M3,9.5 L3.4,7.3 L7.3,0.8 L8.4,2 L4.6,8.8 Z" fill="none" stroke="#999" stroke-width="1"/></svg>
<svg style="position:absolute;left:486.5px;top:632.5px;overflow:visible" width="23" height="20.5" viewBox="0 0 23 20.5"><rect x="1" y="0.5" width="21.5" height="19.5" rx="6" ry="9.75" fill="#cbcbcb"/><ellipse cx="7" cy="10.25" rx="6.3" ry="9.2" fill="#fff" stroke="#dcdcdc" stroke-width="0.9"/></svg>
<span class="t" style="left:513.40px;top:636.74px;font-size:12px;color:#d6d6d6;font-weight:400;transform:scaleX(0.5916);">OFF</span>
<svg style="position:absolute;left:256.8px;top:664.3000000000001px;overflow:visible" width="45" height="11.8" viewBox="0 0 45 11.8"><polygon points="5.40,0.00 6.74,3.78 10.20,4.10 7.56,6.77 8.37,10.75 5.40,8.61 2.43,10.75 3.24,6.77 0.60,4.10 4.06,3.78" fill="#f5922f"/><polygon points="13.80,0.00 15.14,3.78 18.60,4.10 15.96,6.77 16.77,10.75 13.80,8.61 10.83,10.75 11.64,6.77 9.00,4.10 12.46,3.78" fill="#f5922f"/><polygon points="22.20,0.00 23.54,3.78 27.00,4.10 24.36,6.77 25.17,10.75 22.20,8.61 19.23,10.75 20.04,6.77 17.40,4.10 20.86,3.78" fill="#c4c4c4"/><polygon points="30.60,0.00 31.94,3.78 35.40,4.10 32.76,6.77 33.57,10.75 30.60,8.61 27.63,10.75 28.44,6.77 25.80,4.10 29.26,3.78" fill="#c4c4c4"/><polygon points="39.00,0.00 40.34,3.78 43.80,4.10 41.16,6.77 41.97,10.75 39.00,8.61 36.03,10.75 36.84,6.77 34.20,4.10 37.66,3.78" fill="#c4c4c4"/></svg>
<span class="t" style="left:384.00px;top:665.34px;font-size:12px;color:#555;font-weight:400;transform:scaleX(0.7179);">0/10</span>
<svg style="position:absolute;left:406.8px;top:663.6px;overflow:visible" width="8.5" height="13" viewBox="0 0 8.5 13"><path d="M4.5,2 H0.7 V12.3 H7.6 V7" fill="none" stroke="#999" stroke-width="1.1"/><path d="M3,9.5 L3.4,7.3 L7.3,0.8 L8.4,2 L4.6,8.8 Z" fill="none" stroke="#999" stroke-width="1"/></svg>
<svg style="position:absolute;left:486.5px;top:662.1px;overflow:visible" width="23" height="20.5" viewBox="0 0 23 20.5"><rect x="1" y="0.5" width="21.5" height="19.5" rx="6" ry="9.75" fill="#cbcbcb"/><ellipse cx="7" cy="10.25" rx="6.3" ry="9.2" fill="#fff" stroke="#dcdcdc" stroke-width="0.9"/></svg>
<span class="t" style="left:513.40px;top:666.34px;font-size:12px;color:#d6d6d6;font-weight:400;transform:scaleX(0.5916);">OFF</span>
<svg style="position:absolute;left:256.8px;top:693.9000000000001px;overflow:visible" width="45" height="11.8" viewBox="0 0 45 11.8"><polygon points="5.40,0.00 6.74,3.78 10.20,4.10 7.56,6.77 8.37,10.75 5.40,8.61 2.43,10.75 3.24,6.77 0.60,4.10 4.06,3.78" fill="#f5922f"/><polygon points="13.80,0.00 15.14,3.78 18.60,4.10 15.96,6.77 16.77,10.75 13.80,8.61 10.83,10.75 11.64,6.77 9.00,4.10 12.46,3.78" fill="#f5922f"/><polygon points="22.20,0.00 23.54,3.78 27.00,4.10 24.36,6.77 25.17,10.75 22.20,8.61 19.23,10.75 20.04,6.77 17.40,4.10 20.86,3.78" fill="#f5922f"/><polygon points="30.60,0.00 31.94,3.78 35.40,4.10 32.76,6.77 33.57,10.75 30.60,8.61 27.63,10.75 28.44,6.77 25.80,4.10 29.26,3.78" fill="#c4c4c4"/><polygon points="39.00,0.00 40.34,3.78 43.80,4.10 41.16,6.77 41.97,10.75 39.00,8.61 36.03,10.75 36.84,6.77 34.20,4.10 37.66,3.78" fill="#c4c4c4"/></svg>
<span class="t" style="left:384.00px;top:694.94px;font-size:12px;color:#555;font-weight:400;transform:scaleX(0.7179);">0/10</span>
<svg style="position:absolute;left:406.8px;top:693.2px;overflow:visible" width="8.5" height="13" viewBox="0 0 8.5 13"><path d="M4.5,2 H0.7 V12.3 H7.6 V7" fill="none" stroke="#999" stroke-width="1.1"/><path d="M3,9.5 L3.4,7.3 L7.3,0.8 L8.4,2 L4.6,8.8 Z" fill="none" stroke="#999" stroke-width="1"/></svg>
<svg style="position:absolute;left:486.5px;top:691.7px;overflow:visible" width="23" height="20.5" viewBox="0 0 23 20.5"><rect x="1" y="0.5" width="21.5" height="19.5" rx="6" ry="9.75" fill="#cbcbcb"/><ellipse cx="7" cy="10.25" rx="6.3" ry="9.2" fill="#fff" stroke="#dcdcdc" stroke-width="0.9"/></svg>
<span class="t" style="left:513.40px;top:695.94px;font-size:12px;color:#d6d6d6;font-weight:400;transform:scaleX(0.5916);">OFF</span>
<svg style="position:absolute;left:256.8px;top:723.5px;overflow:visible" width="45" height="11.8" viewBox="0 0 45 11.8"><polygon points="5.40,0.00 6.74,3.78 10.20,4.10 7.56,6.77 8.37,10.75 5.40,8.61 2.43,10.75 3.24,6.77 0.60,4.10 4.06,3.78" fill="#f5922f"/><polygon points="13.80,0.00 15.14,3.78 18.60,4.10 15.96,6.77 16.77,10.75 13.80,8.61 10.83,10.75 11.64,6.77 9.00,4.10 12.46,3.78" fill="#f5922f"/><polygon points="22.20,0.00 23.54,3.78 27.00,4.10 24.36,6.77 25.17,10.75 22.20,8.61 19.23,10.75 20.04,6.77 17.40,4.10 20.86,3.78" fill="#f5922f"/><polygon points="30.60,0.00 31.94,3.78 35.40,4.10 32.76,6.77 33.57,10.75 30.60,8.61 27.63,10.75 28.44,6.77 25.80,4.10 29.26,3.78" fill="#f5922f"/><polygon points="39.00,0.00 40.34,3.78 43.80,4.10 41.16,6.77 41.97,10.75 39.00,8.61 36.03,10.75 36.84,6.77 34.20,4.10 37.66,3.78" fill="#c4c4c4"/></svg>
<span class="t" style="left:384.00px;top:724.54px;font-size:12px;color:#555;font-weight:400;transform:scaleX(0.7179);">0/10</span>
<svg style="position:absolute;left:406.8px;top:722.8px;overflow:visible" width="8.5" height="13" viewBox="0 0 8.5 13"><path d="M4.5,2 H0.7 V12.3 H7.6 V7" fill="none" stroke="#999" stroke-width="1.1"/><path d="M3,9.5 L3.4,7.3 L7.3,0.8 L8.4,2 L4.6,8.8 Z" fill="none" stroke="#999" stroke-width="1"/></svg>
<svg style="position:absolute;left:486.5px;top:721.3px;overflow:visible" width="23" height="20.5" viewBox="0 0 23 20.5"><rect x="1" y="0.5" width="21.5" height="19.5" rx="6" ry="9.75" fill="#cbcbcb"/><ellipse cx="7" cy="10.25" rx="6.3" ry="9.2" fill="#fff" stroke="#dcdcdc" stroke-width="0.9"/></svg>
<span class="t" style="left:513.40px;top:725.54px;font-size:12px;color:#d6d6d6;font-weight:400;transform:scaleX(0.5916);">OFF</span>
<svg style="position:absolute;left:256.8px;top:753.1px;overflow:visible" width="45" height="11.8" viewBox="0 0 45 11.8"><polygon points="5.40,0.00 6.74,3.78 10.20,4.10 7.56,6.77 8.37,10.75 5.40,8.61 2.43,10.75 3.24,6.77 0.60,4.10 4.06,3.78" fill="#f5922f"/><polygon points="13.80,0.00 15.14,3.78 18.60,4.10 15.96,6.77 16.77,10.75 13.80,8.61 10.83,10.75 11.64,6.77 9.00,4.10 12.46,3.78" fill="#f5922f"/><polygon points="22.20,0.00 23.54,3.78 27.00,4.10 24.36,6.77 25.17,10.75 22.20,8.61 19.23,10.75 20.04,6.77 17.40,4.10 20.86,3.78" fill="#f5922f"/><polygon points="30.60,0.00 31.94,3.78 35.40,4.10 32.76,6.77 33.57,10.75 30.60,8.61 27.63,10.75 28.44,6.77 25.80,4.10 29.26,3.78" fill="#f5922f"/><polygon points="39.00,0.00 40.34,3.78 43.80,4.10 41.16,6.77 41.97,10.75 39.00,8.61 36.03,10.75 36.84,6.77 34.20,4.10 37.66,3.78" fill="#f5922f"/></svg>
<span class="t" style="left:384.00px;top:754.14px;font-size:12px;color:#555;font-weight:400;transform:scaleX(0.7179);">0/10</span>
<svg style="position:absolute;left:406.8px;top:752.4px;overflow:visible" width="8.5" height="13" viewBox="0 0 8.5 13"><path d="M4.5,2 H0.7 V12.3 H7.6 V7" fill="none" stroke="#999" stroke-width="1.1"/><path d="M3,9.5 L3.4,7.3 L7.3,0.8 L8.4,2 L4.6,8.8 Z" fill="none" stroke="#999" stroke-width="1"/></svg>
<svg style="position:absolute;left:486.5px;top:750.9px;overflow:visible" width="23" height="20.5" viewBox="0 0 23 20.5"><rect x="1" y="0.5" width="21.5" height="19.5" rx="6" ry="9.75" fill="#cbcbcb"/><ellipse cx="7" cy="10.25" rx="6.3" ry="9.2" fill="#fff" stroke="#dcdcdc" stroke-width="0.9"/></svg>
<span class="t" style="left:513.40px;top:755.14px;font-size:12px;color:#d6d6d6;font-weight:400;transform:scaleX(0.5916);">OFF</span>
<span class="t" style="left:577.80px;top:579.19px;font-size:19.5px;color:#e3342f;font-weight:400;transform:scaleX(0.6946);">5. cài đặt trả lời tự động</span>
<span class="t" style="left:562.10px;top:634.29px;font-size:26px;color:#e3342f;font-weight:400;transform:scaleX(0.6375);">【xếp ngôi sao 】: xếp ngôi sao của đánh giá người mua</span>
<span class="t" style="left:561.93px;top:694.79px;font-size:26px;color:#e3342f;font-weight:400;transform:scaleX(0.6482);">【cài đặt 】: hỗ trợ trả lời đánh giá theo xếp ngôi sao, mỗi</span>
<span class="t" style="left:567.05px;top:723.99px;font-size:26px;color:#e3342f;font-weight:400;transform:scaleX(0.6485);">ngôi sao cài đặt nhiều nhất 10 trả lời đánh giá, mỗi lần</span>
<span class="t" style="left:567.05px;top:754.69px;font-size:26px;color:#e3342f;font-weight:400;transform:scaleX(0.6499);">ngẫu nhiên chọn 1 câu.</span>
<span class="t" style="left:561.92px;top:816.19px;font-size:26px;color:#e3342f;font-weight:400;transform:scaleX(0.6488);">【nội dung đánh giá 】: hạn chế là 500 ký tự</span>
<div style="position:absolute;left:1016px;top:430px;width:904px;height:465px;background:#ffffff;"></div>
<div style="position:absolute;left:1016px;top:443.4px;width:904px;height:45.8px;background:linear-gradient(90deg,#4527a3 0%,#4d25ad 45%,#6a19cf 100%);"></div>
<div style="position:absolute;left:1325px;top:443.4px;width:69.7px;height:45.8px;background:rgba(255,255,255,0.28);"></div>
<span class="t" style="left:1028.40px;top:456.58px;font-size:15.5px;color:#ece8fa;font-weight:400;transform:scaleX(0.6896);-webkit-text-stroke:0.35px #ece8fa">Sản phẩm</span>
<span class="t" style="left:1098.30px;top:456.58px;font-size:15.5px;color:#ece8fa;font-weight:400;transform:scaleX(0.6633);-webkit-text-stroke:0.35px #ece8fa">Đơn hàng</span>
<span class="t" style="left:1165.90px;top:456.58px;font-size:15.5px;color:#ece8fa;font-weight:400;transform:scaleX(0.6753);-webkit-text-stroke:0.35px #ece8fa">Tồn kho</span>
<span class="t" style="left:1224.50px;top:456.58px;font-size:15.5px;color:#ece8fa;font-weight:400;transform:scaleX(0.6793);-webkit-text-stroke:0.35px #ece8fa">WMS</span>
<span class="t" style="left:1271.40px;top:456.58px;font-size:15.5px;color:#ece8fa;font-weight:400;transform:scaleX(0.6887);-webkit-text-stroke:0.35px #ece8fa">Đặt hàng</span>
<span class="t" style="left:1334.97px;top:456.58px;font-size:15.5px;color:#ece8fa;font-weight:400;transform:scaleX(0.7270);-webkit-text-stroke:0.35px #ece8fa">Marketing</span>
<span class="t" style="left:1404.70px;top:456.58px;font-size:15.5px;color:#ece8fa;font-weight:400;transform:scaleX(0.7040);-webkit-text-stroke:0.35px #ece8fa">Báo cáo</span>
<span class="t" style="left:1465.19px;top:456.58px;font-size:15.5px;color:#ece8fa;font-weight:400;transform:scaleX(0.7131);-webkit-text-stroke:0.35px #ece8fa">Dịch vụ</span>
<span class="t" style="left:1725.40px;top:459.15px;font-size:14px;color:#ece8fa;font-weight:400;transform:scaleX(0.6598);-webkit-text-stroke:0.45px #ece8fa">VN</span>
<svg style="position:absolute;left:1744px;top:465px;overflow:visible" width="7" height="5" viewBox="0 0 7 5"><polygon points="0,0 7,0 3.5,5" fill="#ece8fa"/></svg>
<svg style="position:absolute;left:1762px;top:457px;overflow:visible" width="11" height="16" viewBox="0 0 11 16"><ellipse cx="5.5" cy="8" rx="4.6" ry="7" fill="none" stroke="#ece8fa" stroke-width="1.3"/><text x="5.5" y="12" font-size="10" text-anchor="middle" fill="#ece8fa" font-family="Liberation Sans">?</text></svg>
<span class="t" style="left:1777.02px;top:459.15px;font-size:14px;color:#ece8fa;font-weight:400;transform:scaleX(0.6782);-webkit-text-stroke:0.45px #ece8fa">Hỗ trợ</span>
<svg style="position:absolute;left:1814px;top:458px;overflow:visible" width="11" height="14" viewBox="0 0 11 14"><polygon points="5.50,0.60 6.46,0.72 6.96,2.39 7.62,2.85 8.96,2.47 9.57,3.44 9.03,5.09 9.25,6.03 10.40,7.00 10.31,8.25 9.03,8.91 8.68,9.77 8.96,11.53 8.22,12.32 6.96,11.61 6.25,11.90 5.50,13.40 4.54,13.28 4.04,11.61 3.38,11.15 2.04,11.53 1.43,10.56 1.97,8.91 1.75,7.97 0.60,7.00 0.69,5.75 1.97,5.09 2.32,4.23 2.04,2.47 2.78,1.68 4.04,2.39 4.75,2.10" fill="none" stroke="#ece8fa" stroke-width="1.4" stroke-linejoin="round"/><ellipse cx="5.5" cy="7.0" rx="1.87" ry="2.3800000000000003" fill="none" stroke="#ece8fa" stroke-width="1.19"/></svg>
<span class="t" style="left:1829.40px;top:459.15px;font-size:14px;color:#ece8fa;font-weight:400;transform:scaleX(0.6634);-webkit-text-stroke:0.45px #ece8fa">Cài đặt</span>
<svg style="position:absolute;left:1869px;top:457px;overflow:visible" width="12" height="16" viewBox="0 0 12 16"><ellipse cx="6" cy="4.8" rx="3.7" ry="4.5" fill="#fff"/><path d="M0,16 Q0,9.5 6,9.5 Q12,9.5 12,16 Z" fill="#fff"/></svg>
<div style="position:absolute;left:1886px;top:460px;width:27px;height:12px;background:rgba(190,160,255,0.55);filter:blur(2.5px);border-radius:4px"></div>
<div style="position:absolute;left:1028px;top:489.2px;width:892px;height:355.8px;background:#f4f4f4;"></div>
<div style="position:absolute;left:1017px;top:703px;width:5px;height:38px;background:#eeedfb;border-radius:2px"></div>
<div style="position:absolute;left:1038.5px;top:505px;width:878.5px;height:67.3px;background:#ffffff;border-radius:3px"></div>
<span class="t" style="left:1051.60px;top:534.50px;font-size:13px;color:#999;font-weight:400;transform:scaleX(0.6947);">Sàn TMĐT</span>
<div style="position:absolute;left:1115.9px;top:530px;width:32.1px;height:22px;background:#ecebfb;border-radius:2px"></div>
<span class="t" style="left:1119.40px;top:534.50px;font-size:13px;color:#5a4cc0;font-weight:400;transform:scaleX(0.6830);">Tất cả</span>
<span class="t" style="left:1158.00px;top:534.50px;font-size:13px;color:#444;font-weight:400;transform:scaleX(0.6952);">Shopee</span>
<span class="t" style="left:1201.78px;top:534.50px;font-size:13px;color:#444;font-weight:400;transform:scaleX(0.7190);">Lazada</span>
<div style="position:absolute;left:1038px;top:591.6px;width:879px;height:38.9px;background:#fdf5e6;"></div>
<div style="position:absolute;left:1038px;top:591.6px;width:2.2px;height:38.9px;background:#f2b03a;"></div>
<span class="t" style="left:1051.60px;top:605.04px;font-size:12px;color:#555;font-weight:400;transform:scaleX(0.7756);">Hạn ngạch mỗi ngày mỗi nền tảng của tài khoản hiện tại là</span>
<span class="t" style="left:1297.80px;top:605.04px;font-size:12px;color:#e8403a;font-weight:400;transform:scaleX(0.7402);">5000</span>
<span class="t" style="left:1321.00px;top:605.04px;font-size:12px;color:#555;font-weight:400;transform:scaleX(0.7691);">tin, nếu bạn muốn tăng hạn ngạch, vui lòng</span>
<span class="t" style="left:1500.80px;top:605.04px;font-size:12px;color:#5a4cc0;font-weight:400;transform:scaleX(0.7712);">Nâng cấp VIP</span>
<div style="position:absolute;left:1038.2px;top:667px;width:118.3px;height:31.7px;background:#4a35b6;border-radius:2px"></div>
<span class="t" style="left:1049.70px;top:677.30px;font-size:13px;color:#fff;font-weight:400;transform:scaleX(0.7341);">Chỉnh sửa hàng loạt ∨</span>
<div style="position:absolute;left:1812.4px;top:667px;width:105px;height:31.7px;background:#4a35b6;border-radius:2px"></div>
<span class="t" style="left:1822.88px;top:677.30px;font-size:13px;color:#fff;font-weight:400;transform:scaleX(0.7176);">Mẫu trả lời đánh giá</span>
<span class="t" style="left:1362.49px;top:676.79px;font-size:19.5px;color:#e3342f;font-weight:400;transform:scaleX(0.7078);">Bấm đây có thể bật/tắt trạng thái của mẫu trả lời đánh giá</span>
<div style="position:absolute;left:1038px;top:712.4px;width:880px;height:38.9px;background:#ececec;"></div>
<div style="position:absolute;left:1038px;top:751.3px;width:880px;height:93.7px;background:#ffffff;"></div>
<div style="position:absolute;left:1045px;top:724.5px;width:11px;height:15.3px;box-sizing:border-box;border:1px solid #dcdcdc;background:#fff;border-radius:2px;"></div>
<div style="position:absolute;left:1045px;top:764.5px;width:11px;height:15.5px;box-sizing:border-box;border:1px solid #dcdcdc;background:#fff;border-radius:2px;"></div>
<span class="t" style="left:1070.80px;top:727.02px;font-size:12.5px;color:#888;font-weight:400;transform:scaleX(0.7119);">Gian hàng</span>
<span class="t" style="left:1151.00px;top:727.02px;font-size:12.5px;color:#888;font-weight:400;transform:scaleX(0.6745);">Sàn TMĐT</span>
<span class="t" style="left:1231.04px;top:727.02px;font-size:12.5px;color:#888;font-weight:400;transform:scaleX(0.7618);">Mẫu</span>
<span class="t" style="left:1351.00px;top:727.02px;font-size:12.5px;color:#888;font-weight:400;transform:scaleX(0.6802);">Cài đặt</span>
<span class="t" style="left:1509.30px;top:727.02px;font-size:12.5px;color:#888;font-weight:400;transform:scaleX(0.7022);">Đã gửi hôm nay</span>
<span class="t" style="left:1628.40px;top:727.02px;font-size:12.5px;color:#888;font-weight:400;transform:scaleX(0.7133);">Thời gian</span>
<span class="t" style="left:1748.00px;top:727.02px;font-size:12.5px;color:#888;font-weight:400;transform:scaleX(0.7122);">Trạng thái</span>
<span class="t" style="left:1870.70px;top:727.02px;font-size:12.5px;color:#888;font-weight:400;transform:scaleX(0.6882);">Thao tác</span>
<div style="position:absolute;left:1071px;top:769px;width:25px;height:9px;background:rgba(120,120,120,0.45);filter:blur(2px)"></div>
<span class="t" style="left:1151.00px;top:765.50px;font-size:13px;color:#444;font-weight:400;transform:scaleX(0.7012);">lazada</span>
<div style="position:absolute;left:1231px;top:769px;width:30px;height:9px;background:rgba(120,120,120,0.4);filter:blur(2px)"></div>
<span class="t" style="left:1351.00px;top:765.50px;font-size:13px;color:#444;font-weight:400;transform:scaleX(0.6996);">1 sao ,2 sao ,3 sao ,4 sao</span>
<span class="t" style="left:1508.70px;top:765.50px;font-size:13px;color:#444;font-weight:400;transform:scaleX(0.7571);">0</span>
<span class="t" style="left:1627.00px;top:765.92px;font-size:12.5px;color:#999;font-weight:400;transform:scaleX(0.7449);">Thời gian tạo:</span>
<span class="t" style="left:1627.00px;top:786.90px;font-size:13px;color:#444;font-weight:400;transform:scaleX(0.7142);">28 thg 10 2022 16:31</span>
<span class="t" style="left:1627.00px;top:807.02px;font-size:12.5px;color:#999;font-weight:400;transform:scaleX(0.7414);">Thời gian cập nhật:</span>
<span class="t" style="left:1627.00px;top:828.00px;font-size:13px;color:#444;font-weight:400;transform:scaleX(0.7248);">08 thg 11 2023 19:26</span>
<svg style="position:absolute;left:1744.8px;top:762.3px;overflow:visible" width="30.5" height="22" viewBox="0 0 30.5 22"><rect x="0" y="0" width="30.5" height="22" rx="11" ry="11" fill="#1eaa7c"/><ellipse cx="21.3" cy="11" rx="8" ry="9" fill="#fff"/></svg>
<div style="position:absolute;left:1732.4px;top:757.3px;width:63px;height:34.5px;box-sizing:border-box;border:2px solid #e0262a;background:transparent;border-radius:0px;"></div>
<svg style="position:absolute;left:1686px;top:709px;overflow:visible" width="46" height="58" viewBox="0 0 46 58"><line x1="2.5" y1="2.5" x2="36" y2="46" stroke="#e3262a" stroke-width="2.8" stroke-linecap="round"/><polygon points="44,56 26,46 38,37" fill="#e3262a"/></svg>
<svg style="position:absolute;left:1873.5px;top:774px;overflow:visible" width="13.5" height="17" viewBox="0 0 13.5 17"><polygon points="6.75,0.60 7.95,0.75 8.59,2.81 9.42,3.38 11.10,2.91 11.86,4.11 11.18,6.14 11.45,7.30 12.90,8.50 12.78,10.04 11.18,10.86 10.74,11.92 11.10,14.09 10.17,15.07 8.59,14.19 7.69,14.54 6.75,16.40 5.55,16.25 4.91,14.19 4.08,13.62 2.40,14.09 1.64,12.89 2.32,10.86 2.05,9.70 0.60,8.50 0.72,6.96 2.32,6.14 2.76,5.08 2.40,2.91 3.33,1.93 4.91,2.81 5.81,2.46" fill="none" stroke="#8a8a8a" stroke-width="1.3" stroke-linejoin="round"/><ellipse cx="6.75" cy="8.5" rx="2.2950000000000004" ry="2.89" fill="none" stroke="#8a8a8a" stroke-width="1.105"/></svg>
<svg style="position:absolute;left:1901.5px;top:773px;overflow:visible" width="12" height="18" viewBox="0 0 12 18"><path d="M1,2 H9 V17 H1 Z" fill="none" stroke="#8a8a8a" stroke-width="1.3"/><path d="M3,1 H7" stroke="#8a8a8a" stroke-width="1.5"/><path d="M3,7 H7 M3,10 H5.5" stroke="#8a8a8a" stroke-width="1.1"/><circle cx="9.5" cy="14" r="2.5" fill="#fff" stroke="#8a8a8a" stroke-width="1.1"/></svg>
<div style="position:absolute;left:1917.8px;top:751.3px;width:2.2px;height:93px;background:#eeeeee;"></div>
<svg style="position:absolute;left:1913.5px;top:812.5px;overflow:visible" width="7" height="18" viewBox="0 0 7 18"><ellipse cx="7" cy="9" rx="5.5" ry="8" fill="none" stroke="#4a3cb0" stroke-width="1.7"/></svg>
</body></html>
